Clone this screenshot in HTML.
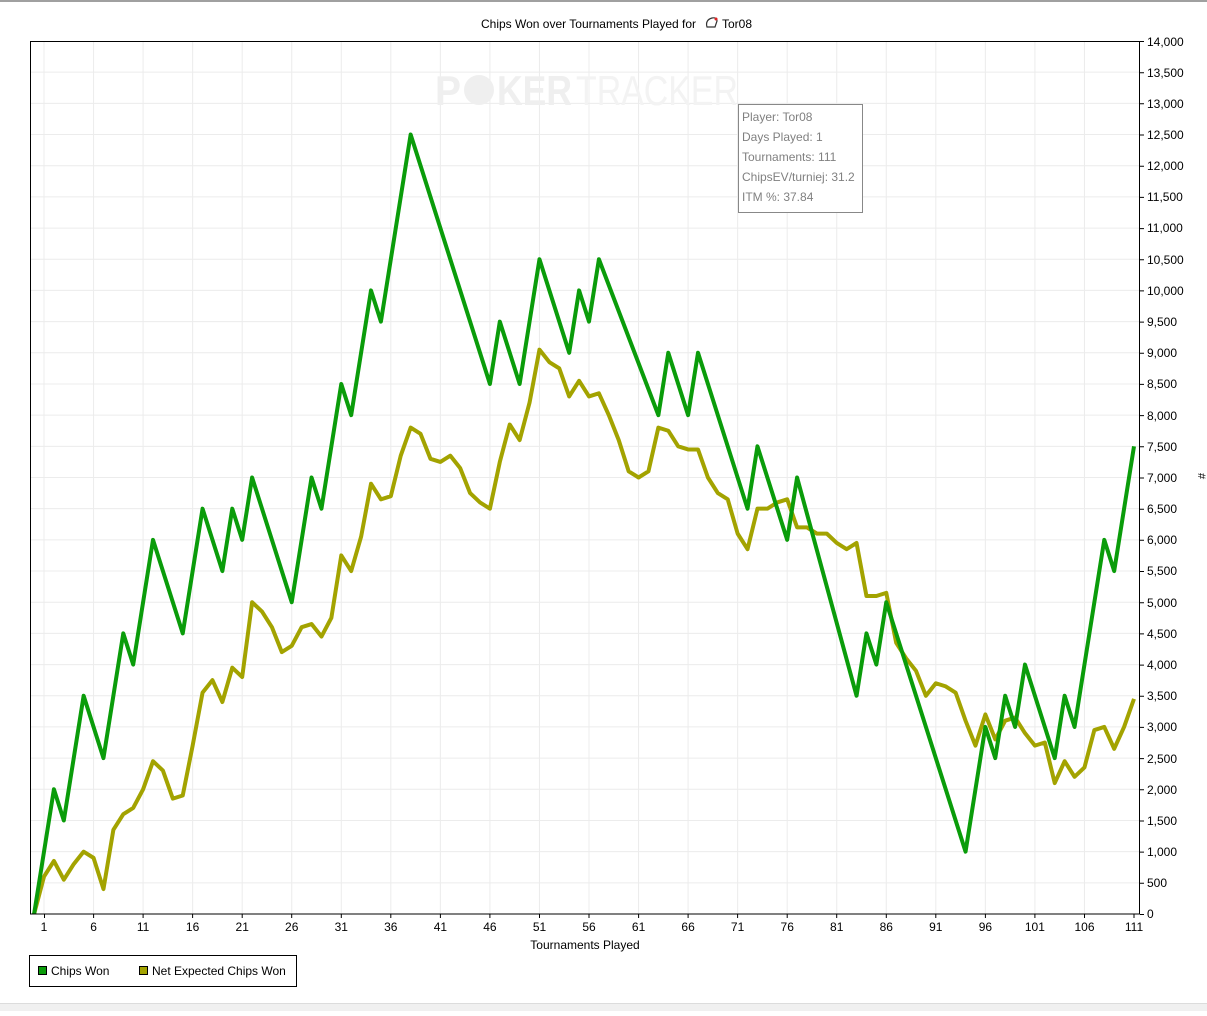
<!DOCTYPE html>
<html><head><meta charset="utf-8"><style>
body{margin:0;background:#fff;width:1207px;height:1011px;overflow:hidden;font-family:"Liberation Sans",sans-serif}
svg text{font-family:"Liberation Sans",sans-serif;font-size:12px;fill:#000}
</style></head><body>
<svg width="1207" height="1011" viewBox="0 0 1207 1011" xmlns="http://www.w3.org/2000/svg">
<rect x="0" y="0" width="1207" height="2" fill="#a0a0a0"/>
<rect x="0" y="1004" width="1207" height="7" fill="#f0f0f0"/>
<rect x="0" y="1003" width="1207" height="1" fill="#dcdcdc"/>
<text x="481" y="28">Chips Won over Tournaments Played for</text>
<path d="M707 27 q-2 -7 5 -9 q5 -1 5 3 l-2 6 z" fill="none" stroke="#333" stroke-width="1.2"/>
<circle cx="716" cy="19" r="1.5" fill="#d22"/>
<text x="722" y="28">Tor08</text>
<g transform="translate(34.1,914) scale(9.909,-0.062357)">
<path vector-effect="non-scaling-stroke" stroke="#ececec" stroke-width="1" fill="none" d="M-0.41 500H111.6M-0.41 1000H111.6M-0.41 1500H111.6M-0.41 2000H111.6M-0.41 2500H111.6M-0.41 3000H111.6M-0.41 3500H111.6M-0.41 4000H111.6M-0.41 4500H111.6M-0.41 5000H111.6M-0.41 5500H111.6M-0.41 6000H111.6M-0.41 6500H111.6M-0.41 7000H111.6M-0.41 7500H111.6M-0.41 8000H111.6M-0.41 8500H111.6M-0.41 9000H111.6M-0.41 9500H111.6M-0.41 10000H111.6M-0.41 10500H111.6M-0.41 11000H111.6M-0.41 11500H111.6M-0.41 12000H111.6M-0.41 12500H111.6M-0.41 13000H111.6M-0.41 13500H111.6M1 0V14000M6 0V14000M11 0V14000M16 0V14000M21 0V14000M26 0V14000M31 0V14000M36 0V14000M41 0V14000M46 0V14000M51 0V14000M56 0V14000M61 0V14000M66 0V14000M71 0V14000M76 0V14000M81 0V14000M86 0V14000M91 0V14000M96 0V14000M101 0V14000M106 0V14000"/>
</g>
<text x="435" y="105" textLength="26" lengthAdjust="spacingAndGlyphs" style="font-size:42px;font-weight:bold;fill:#efefef">P</text>
<circle cx="479" cy="90" r="15" fill="#efefef"/>
<text x="497" y="105" textLength="75" lengthAdjust="spacingAndGlyphs" style="font-size:42px;font-weight:bold;fill:#efefef">KER</text>
<text x="576" y="105" textLength="162" lengthAdjust="spacingAndGlyphs" style="font-size:42px;fill:#f3f3f3">TRACKER</text>
<g transform="translate(34.1,914) scale(9.909,-0.062357)" fill="none" stroke-linejoin="round">
<polyline vector-effect="non-scaling-stroke" stroke="#a3a300" stroke-width="4" points="0,0 1,600 2,850 3,550 4,800 5,1000 6,900 7,400 8,1350 9,1600 10,1700 11,2000 12,2450 13,2300 14,1850 15,1900 16,2700 17,3550 18,3750 19,3400 20,3950 21,3800 22,5000 23,4850 24,4600 25,4200 26,4300 27,4600 28,4650 29,4450 30,4750 31,5750 32,5500 33,6050 34,6900 35,6650 36,6700 37,7350 38,7800 39,7700 40,7300 41,7250 42,7350 43,7150 44,6750 45,6600 46,6500 47,7250 48,7850 49,7600 50,8200 51,9050 52,8850 53,8750 54,8300 55,8550 56,8300 57,8350 58,8000 59,7600 60,7100 61,7000 62,7100 63,7800 64,7750 65,7500 66,7450 67,7450 68,7000 69,6750 70,6650 71,6100 72,5850 73,6500 74,6500 75,6600 76,6650 77,6200 78,6200 79,6100 80,6100 81,5950 82,5850 83,5950 84,5100 85,5100 86,5150 87,4350 88,4100 89,3900 90,3500 91,3700 92,3650 93,3550 94,3100 95,2700 96,3200 97,2800 98,3100 99,3150 100,2900 101,2700 102,2750 103,2100 104,2450 105,2200 106,2350 107,2950 108,3000 109,2650 110,3000 111,3450"/>
<polyline vector-effect="non-scaling-stroke" stroke="#0a9c0a" stroke-width="4" points="0,0 2,2000 3,1500 5,3500 7,2500 9,4500 10,4000 12,6000 15,4500 17,6500 19,5500 20,6500 21,6000 22,7000 26,5000 28,7000 29,6500 31,8500 32,8000 34,10000 35,9500 38,12500 46,8500 47,9500 49,8500 51,10500 54,9000 55,10000 56,9500 57,10500 63,8000 64,9000 66,8000 67,9000 72,6500 73,7500 76,6000 77,7000 83,3500 84,4500 85,4000 86,5000 94,1000 96,3000 97,2500 98,3500 99,3000 100,4000 103,2500 104,3500 105,3000 108,6000 109,5500 111,7500"/>
</g>
<rect x="30.5" y="41.5" width="1109" height="872.5" fill="none" stroke="#000" stroke-width="1"/>
<path stroke="#000" stroke-width="1" d="M1140 41.5h4M1140 72.7h4M1140 103.8h4M1140 135h4M1140 166.2h4M1140 197.4h4M1140 228.6h4M1140 259.7h4M1140 290.9h4M1140 322.1h4M1140 353.3h4M1140 384.4h4M1140 415.6h4M1140 446.8h4M1140 478h4M1140 509.2h4M1140 540.3h4M1140 571.5h4M1140 602.7h4M1140 633.9h4M1140 665.1h4M1140 696.2h4M1140 727.4h4M1140 758.6h4M1140 789.8h4M1140 821h4M1140 852.1h4M1140 883.3h4M1140 914.5h4M44.5 914v4M93.6 914v4M143.1 914v4M192.6 914v4M242.2 914v4M291.7 914v4M341.3 914v4M390.8 914v4M440.4 914v4M489.9 914v4M539.5 914v4M589 914v4M638.6 914v4M688.1 914v4M737.6 914v4M787.2 914v4M836.7 914v4M886.3 914v4M935.8 914v4M985.4 914v4M1034.9 914v4M1084.5 914v4M1134 914v4"/>
<g>
<text x="1147" y="46">14,000</text><text x="1147" y="77">13,500</text><text x="1147" y="108">13,000</text><text x="1147" y="139">12,500</text><text x="1147" y="170">12,000</text><text x="1147" y="201">11,500</text><text x="1147" y="232">11,000</text><text x="1147" y="264">10,500</text><text x="1147" y="295">10,000</text><text x="1147" y="326">9,500</text><text x="1147" y="357">9,000</text><text x="1147" y="388">8,500</text><text x="1147" y="420">8,000</text><text x="1147" y="451">7,500</text><text x="1147" y="482">7,000</text><text x="1147" y="513">6,500</text><text x="1147" y="544">6,000</text><text x="1147" y="575">5,500</text><text x="1147" y="607">5,000</text><text x="1147" y="638">4,500</text><text x="1147" y="669">4,000</text><text x="1147" y="700">3,500</text><text x="1147" y="731">3,000</text><text x="1147" y="763">2,500</text><text x="1147" y="794">2,000</text><text x="1147" y="825">1,500</text><text x="1147" y="856">1,000</text><text x="1147" y="887">500</text><text x="1147" y="918">0</text>
</g>
<text x="1193" y="478" transform="rotate(90 1198 478)" style="font-size:11px">#</text>
<g text-anchor="middle">
<text x="44" y="931">1</text><text x="93.6" y="931">6</text><text x="143.1" y="931">11</text><text x="192.6" y="931">16</text><text x="242.2" y="931">21</text><text x="291.7" y="931">26</text><text x="341.3" y="931">31</text><text x="390.8" y="931">36</text><text x="440.4" y="931">41</text><text x="489.9" y="931">46</text><text x="539.5" y="931">51</text><text x="589" y="931">56</text><text x="638.6" y="931">61</text><text x="688.1" y="931">66</text><text x="737.6" y="931">71</text><text x="787.2" y="931">76</text><text x="836.7" y="931">81</text><text x="886.3" y="931">86</text><text x="935.8" y="931">91</text><text x="985.4" y="931">96</text><text x="1034.9" y="931">101</text><text x="1084.5" y="931">106</text><text x="1134" y="931">111</text>
<text x="585" y="949">Tournaments Played</text>
</g>
<rect x="738.5" y="104.5" width="124" height="108" fill="#fff" stroke="#888"/>
<g style="font-size:12px">
<text x="742" y="121" style="fill:#808080">Player: Tor08</text>
<text x="742" y="141" style="fill:#808080">Days Played: 1</text>
<text x="742" y="161" style="fill:#808080">Tournaments: 111</text>
<text x="742" y="181" style="fill:#808080">ChipsEV/turniej: 31.2</text>
<text x="742" y="201" style="fill:#808080">ITM %: 37.84</text>
</g>
<rect x="29.5" y="955.5" width="267" height="31" fill="#fff" stroke="#000"/>
<rect x="38.5" y="966.5" width="8" height="8" fill="#0a9c0a" stroke="#000"/>
<text x="51" y="975">Chips Won</text>
<rect x="139.5" y="966.5" width="8" height="8" fill="#a3a300" stroke="#000"/>
<text x="152" y="975">Net Expected Chips Won</text>
</svg>
</body></html>
